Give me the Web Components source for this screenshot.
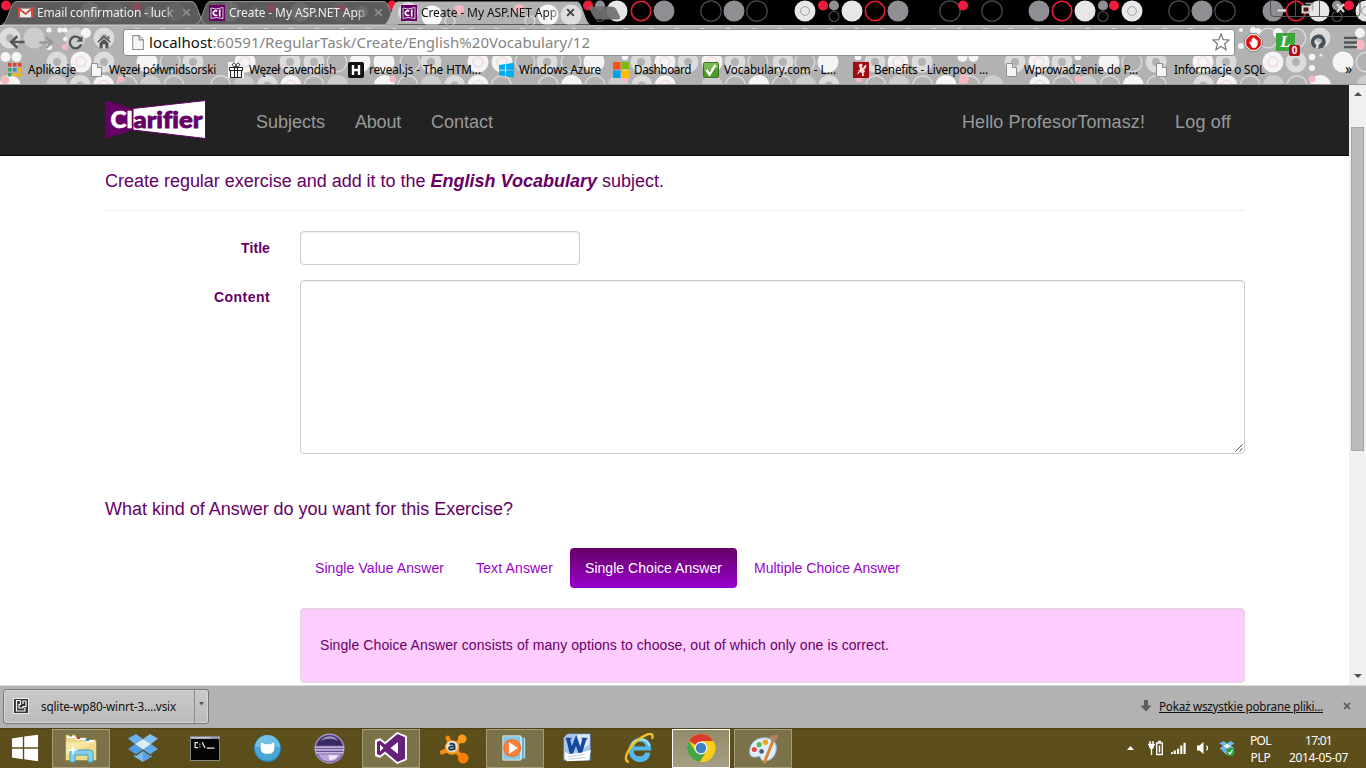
<!DOCTYPE html>
<html lang="pl">
<head>
<meta charset="utf-8">
<title>Create - My ASP.NET Application</title>
<style>
html,body{margin:0;padding:0;width:1366px;height:768px;overflow:hidden;background:#fff}
</style>
</head>
<body>
<desktop-screen></desktop-screen>
<script>
const define = (name, html, init) => customElements.define(name, class extends HTMLElement {
  connectedCallback() {
    if (this.shadowRoot) return;
    this.attachShadow({mode: 'open'}).innerHTML = typeof html === 'function' ? html(this) : html;
    if (init) init(this);
  }
});

/* Text whose letter spacing is tuned so that it takes exactly w pixels */
define('fit-text', `<style>:host{display:inline-block;white-space:pre;flex:none}span{display:inline-block}</style><span><slot></slot></span>`, el => {
  const w = +el.getAttribute('w'), s = el.shadowRoot.querySelector('span');
  s.style.letterSpacing = '0px';
  const n = el.textContent.length, nat = s.getBoundingClientRect().width;
  if (nat) s.style.letterSpacing = ((w - nat) / n) + 'px';
  el.style.width = w + 'px';
});

/* Icons */
const docIcon = '<path d="M3.5 1.5h6l4 4v9h-10z" fill="#f6f6f6" stroke="#8e8e8e"/><path d="M9.5 1.5v4h4" fill="#ddd" stroke="#8e8e8e"/>';
const siteIcon = '<rect width="16" height="16" fill="#606"/><path d="M2 3l5 1 7-1.500v11l-7-1-5 1z" fill="none" stroke="#fff" stroke-width=".8"/><path d="M8.200 6.300A2.300 2.300 0 1 0 8.200 9.800M10.700 4.500v7" fill="none" stroke="#fff" stroke-width="1.700"/>';
const icons = {
  gmail: ['0 0 16 16', '<path d="M1.500 3h13v10h-13z" fill="#f7f2f0"/><path d="M1 13V3l7 6 7-6v10" fill="none" stroke="#d94a3d" stroke-width="2.200"/><path d="M3 12l4-4M13 12L9 8" stroke="#ccc" stroke-width=".7"/>'],
  site: ['0 0 16 16', siteIcon],
  doc: ['0 0 16 16', docIcon],
  apps: ['0 0 16 16', ['#e33b2e','#e33b2e','#e33b2e','#3aa757','#2a8be0','#f5b400','#3aa757','#f5b400','#f5b400'].map((c,i)=>`<rect x="${1+(i%3)*5}" y="${1+(i/3|0)*5}" width="3.500" height="3.500" fill="${c}"/>`).join('')],
  gift: ['0 0 16 16', '<rect width="16" height="16" fill="#f4f4f4"/><path d="M1.500 5.500h13v3h-13zM2.500 8.500h11v7h-11zM6.500 5.500v10M9.500 5.500v10M8 5C5 5 3.500 3 5 1.500S8 3 8 5c0-2 1.500-5 3-3.500S11 5 8 5" fill="none" stroke="#222" stroke-width="1"/>'],
  reveal: ['0 0 16 16', '<rect width="16" height="16" rx="2" fill="#111"/><path d="M5 3v10M11 3v10M5 8h6" stroke="#fff" stroke-width="2.400"/>'],
  windows: ['0 0 16 16', '<path d="M1 3l6-.900v5.600H1zM8 2l8-1.200v6.900H8zM1 8.600h6v5.600L1 13.300zM8 8.600h8v6.900L8 14.300z" fill="#00adef"/>'],
  ms: ['0 0 16 16', '<path d="M0 0h7.500v7.500H0z" fill="#f65314"/><path d="M8.500 0H16v7.500H8.500z" fill="#7cbb00"/><path d="M0 8.500h7.500V16H0z" fill="#00a1f1"/><path d="M8.500 8.500H16V16H8.500z" fill="#fb0"/>'],
  check: ['0 0 16 16', '<rect x=".500" y=".500" width="15" height="15" rx="1.500" fill="#4f9a2c" stroke="#3a7520"/><path d="M1 1h14v5L1 9z" fill="#79b94f"/><path d="M3.500 8l3 4.500L12.500 3" fill="none" stroke="#fff" stroke-width="2.400"/>'],
  liver: ['0 0 16 16', '<rect width="16" height="16" fill="#a00d10"/><path d="M5.500 3L8 1.500l1.500 1L9 5l1 1.500L11 4l2.500-1.500-.5 3-2 2.500 1 1.500-1.500 1.500.5 3h-2l0-3-1.500-1-2 1.500-1 1.500.3-3L7 9.500 4.500 9l2.500-1.500L6.500 5z" fill="#f6dede"/>'],
  back: ['0 0 18 18', '<path d="M16.500 9H4M9.300 3.300L3.200 9l6.100 5.700" fill="none" stroke="#555" stroke-width="2.600"/>'],
  fwd: ['0 0 18 18', '<path d="M1.500 9H14M8.700 3.300L14.800 9l-6.100 5.700" fill="none" stroke="#999" stroke-width="2.600"/>'],
  reload: ['0 0 18 18', '<path d="M14.300 5.500A6.200 6.200 0 1 0 15 11" fill="none" stroke="#555" stroke-width="2.600"/><path d="M16.500 1.500v6.700H9.800z" fill="#555"/>'],
  home: ['0 0 18 18', '<path d="M9 1.500l7.500 7-1.200 1.200L9 4 2.700 9.700 1.500 8.500zM13 2.500h2v4l-2-2zM4 10l5-4.500 5 4.500v6h-3.500v-4.500h-3V16H4z" fill="#555"/>'],
  star: ['0 0 18 18', '<path d="M9 1l2.200 5.600 6 .4-4.600 3.800 1.500 5.900L9 13.400l-5.100 3.300 1.500-5.900L.8 7l6-.4z" fill="#fff" stroke="#777" stroke-width="1.200"/>'],
  abp: ['0 0 20 20', '<path d="M6.300.8h7.400l5.500 5.500v7.400l-5.500 5.500H6.300L.8 13.700V6.300z" fill="#fff" stroke="#777"/><path d="M6.900 2.300h6.200l4.600 4.600v6.200l-4.600 4.600H6.900l-4.600-4.600V6.900z" fill="#d8140f"/><path d="M5.500 9.500l1-.7L8 10.500V6h1.200V4.700h1.300V5.500h1.300V6.500H13v1h1.300v4.500l-1.800 3.500H8.500z" fill="#fff"/>'],
  ext: ['0 0 18 18', '<path d="M6.500 14.500A6.300 6.300 0 1 1 14.500 12.500" fill="none" stroke="#48505a" stroke-width="4"/><path d="M9 17l1-5 3-3 3 6z" fill="#48505a"/>'],
  menu: ['0 0 14 14', '<path d="M0 2h14M0 7h14M0 12h14" stroke="#555" stroke-width="2.600"/>'],
  close: ['0 0 8 8', '<path d="M1 1l6 6M7 1L1 7" stroke="currentColor" stroke-width="1.700"/>'],
  vsix: ['0 0 16 16', '<rect width="16" height="16" fill="#eee"/><rect x="1" y="1" width="14" height="14" fill="#333"/><path d="M7.500 2.500h-4v10.500h8.500v-3.500M7.500 2.500v4h-1.500v3.500h4V8.500h3V3h-3v3" fill="none" stroke="#fff" stroke-width="1.200"/>'],
  down: ['0 0 12 12', '<path d="M4 0h4v5.500h3.500L6 11.500.5 5.500H4z" fill="#5c5c5c"/>'],
  start: ['0 0 28 28', '<path d="M1 4.500l10.800-1.700v10.500H1zM13.200 2.600L27 .8v12.500H13.200zM1 14.700h10.800v10.500L1 23.500zM13.200 14.700H27v12.500l-13.800-1.900z" fill="#fff"/>'],
  explorer: ['0 0 32 30', '<path d="M1 5V2h9l2 3h9l2 2h8v20H1z" fill="#efd98b" stroke="#cfae56" stroke-width=".800"/><path d="M2 4h8M11 6h9M21 8h8" stroke="#fff" stroke-width="2"/><path d="M4 2.500h3" stroke="#25a244" stroke-width="2"/><path d="M12 5h3" stroke="#d33" stroke-width="2"/><path d="M21 7h3" stroke="#38c" stroke-width="2"/><path d="M1 9h30v18H1z" fill="#f8e7a3"/><path d="M1 22L31 9v18H1z" fill="#f0d98a"/><path d="M5 29V20q0-3 3-3h17q3 0 3 3v9h-5v-7H10v7z" fill="#86cfe9" stroke="#3f9fc6"/><path d="M8 10l1 6 5 1-5 1-1 5-1-5-5-1 5-1z" fill="#fff"/>'],
  dropbox: ['0 0 32 28', '<path d="M9 0l7 5-8 5-7-5.500z" fill="#69b4f0"/><path d="M23 0l-7 5 8 5 7-5.500z" fill="#7dc1f5"/><path d="M8 10l8 5.500-7 5L1 15z" fill="#4d9fe4"/><path d="M24 10l-8 5.500 7 5 8-5.500z" fill="#5cabee"/><path d="M16 5l8 5-8 5.500L8 10z" fill="#d9edfb"/><path d="M7 21l2 1 7-5v11l-9-5.500z" fill="#78b9ee"/><path d="M25 21l-2 1-7-5v11l9-5.500z" fill="#5a9fe0"/>'],
  dropok: ['0 0 32 30', '<path d="M9 0l7 5-8 5-7-5.500zM23 0l-7 5 8 5 7-5.500zM8 10l8 5.500-7 5L1 15zM24 10l-8 5.500 7 5 8-5.500zM7 21l9-4 9 4-9 7z" fill="#6cb8f2"/><path d="M16 5l8 5-8 5.500L8 10z" fill="#e6f3fc"/><circle cx="23" cy="22" r="8" fill="#27a33b"/><path d="M19 22l3 4 5-8" fill="none" stroke="#fff" stroke-width="2.500"/>'],
  cmd: ['0 0 32 26', '<rect x=".500" y=".500" width="31" height="25" fill="#050505" stroke="#888"/><path d="M1 1h30v2H1z" fill="#bcc4d0"/><path d="M23 2h7" stroke="#345" stroke-dasharray="1.500 1"/><path d="M8.500 7H5.500v5h3M10.500 8v1M10.500 11v1M13 6.500l3 6M18 12.500h8" fill="none" stroke="#eee" stroke-width="1.300"/>'],
  github: ['0 0 30 30', '<circle cx="15" cy="15" r="14" fill="#2889bd"/><circle cx="15" cy="14.500" r="13" fill="#4aa6d4"/><path d="M2 14a13 13 0 0 1 26 0q-13-6-26 0z" fill="#72bfe4"/><path d="M8.500 8.500l3.500 2h6l3.500-2 .8 4.500-.800 4.500Q20 20.500 15 20.500t-6.500-3L7.700 13z" fill="#fff"/>'],
  eclipse: ['0 0 32 32', '<circle cx="16" cy="16" r="15.500" fill="#a99bc9"/><circle cx="16" cy="16" r="14.300" fill="#6a4f9b"/><path d="M2.500 13a14 14 0 0 1 27 0z" fill="#3a2a63"/><path d="M7 8a11 11 0 0 1 18 0q-9-4-18 0z" fill="#9b90b8"/><path d="M1.500 14.500h29M1 17.500h30M2 20.500h28" stroke="#e2d9f1" stroke-width="1.300"/><path d="M4 22h24q-4 7.500-12 7.500T4 22z" fill="#b9a5da"/><path d="M15 23h10q-3 5-9 5z" fill="#f0eaf8"/>'],
  vs: ['0 0 32 32', '<path d="M22 0l10 4v24l-10 4-12-10-5 4-5-2V8l5-2 5 4z" fill="#fff"/><path d="M22.500 2l7.500 3.200v21.600L22.500 30 10 19.500 5 23.500 2 22V10l3-1.500 5 4zM23 10l-7.500 6 7.500 6zM5 12.500v7L8.500 16z" fill="#68217a" fill-rule="evenodd"/>'],
  avast: ['0 0 32 32', '<path d="M15 15L25 6M15 15L26 26M14 16L4 20M14 14L10 5" stroke="#f58a12" stroke-width="4.500" stroke-linecap="round"/><circle cx="25" cy="6" r="4.500" fill="#ff9a1c"/><circle cx="26" cy="26" r="5.500" fill="#f77f00"/><circle cx="14.500" cy="15" r="7.500" fill="#ff9d1a"/><circle cx="14.500" cy="14" r="6" fill="#dfe3e6"/><path d="M12 11.500q5-1.500 5 2v4M17 14h-3q-3 .5-2.500 2.300t5.500 0" fill="none" stroke="#273b49" stroke-width="2"/>'],
  wmp: ['0 0 30 30', '<path d="M20 3l6 1v22l-6 2z" fill="#58a9cf"/><path d="M22 3v24M25 4v22" stroke="#d4edf6" stroke-width="1"/><path d="M2 2h19v26H2z" fill="#8cc5dc" stroke="#d2ebf4"/><circle cx="12" cy="15" r="9.500" fill="#f06a1d"/><circle cx="12" cy="15" r="8.500" fill="#f5813a"/><path d="M8.500 8.500l9.500 6.500-9.500 6.500z" fill="#fff"/>'],
  word: ['0 0 32 32', '<path d="M6 1h24v28H2V5z" fill="#f4f8fd" stroke="#5c86c6"/><path d="M6 1.500h23.500v18Q12 25 2.500 20V5z" fill="#a9c5eb"/><path d="M16 1.500h13.500v10L20 19z" fill="#dce8f8"/><path d="M6.500 6l3.500 15L15 8l4.500 13L24 6" fill="none" stroke="#14489c" stroke-width="4"/><path d="M4 6h6M21 6h6" stroke="#14489c" stroke-width="2"/><path d="M3 23l17-2 11-3-3 11-23 1z" fill="#fff"/><path d="M6 25.500l18-3M7 28l18-2" stroke="#b6c6dc"/>'],
  ie: ['0 0 32 32', '<path d="M27 20h-5q-2 4-6 4-6 0-6-6h18c1-8-4-13-11-13S5 11 5 18s5 12 12 12q8 0 10-8z" fill="#53b9ec"/><path d="M10.500 14q1-5 6-5t6 5z" fill="#5e5423"/><path d="M7 14q3-7.500 10-7.500 7 0 9.500 7" fill="none" stroke="#a9e4fb" stroke-width="1.800"/><path d="M5 30C-3 28 6 13 16 6S31-1 29 6" fill="none" stroke="#f4c120" stroke-width="2.400"/>'],
  chrome: ['0 0 30 30', '<circle cx="15" cy="15" r="14" fill="#f8cd1b"/><path d="M15 15L2.900 8A14 14 0 0 1 27.200 8.200L15 8.500z" fill="#dc3a2c"/><path d="M9.500 18.500L2.900 8A14 14 0 0 0 14 29l6.500-10z" fill="#46a647"/><path d="M15 8h12.500A14 14 0 0 1 14 29l7-12z" fill="#f8cd1b"/><circle cx="15" cy="15" r="6.500" fill="#f5f5f5"/><circle cx="15" cy="15" r="5.200" fill="#3e80c6"/>'],
  paint: ['0 0 32 32', '<path d="M2 16C4 6 15 3 23 6c8 3 8 14 2 20-5 4-11 4-12 0-1-3-3-1-6-1-5 0-6-4-5-9z" fill="#dceffa" stroke="#8db9d4"/><circle cx="6.500" cy="17" r="2.600" fill="#e5493c"/><circle cx="11.500" cy="12" r="2.600" fill="#53b84b"/><circle cx="18" cy="9.500" r="2.800" fill="#f3a51c"/><circle cx="14" cy="19" r="2.400" fill="#557"/><path d="M17 30l8-20" stroke="#e2832c" stroke-width="3" stroke-linecap="round"/><path d="M24 9l-2-7 3 1 6-2q0 6-5 9z" fill="#b98157"/>'],
  plug: ['0 0 16 16', '<path d="M2 1v3M5 1v3M0 4.500h7" fill="none" stroke="#fff" stroke-width="1.400"/><path d="M1 5h5v2L4.500 9h-2L1 7z" fill="#fff"/><path d="M3.500 8v7" stroke="#fff" stroke-width="1.400"/><path d="M8.700 3h5.600v11.500H8.700z" fill="#5d4f1c" stroke="#fff" stroke-width="1.300"/><path d="M10 1.500h3" stroke="#fff" stroke-width="1.500"/><path d="M10.800 5.500h1.400v7h-1.400z" fill="#fff"/>'],
  signal: ['0 0 16 14', '<path d="M1 14v-2M4 14v-4M7.500 14V8M11 14V4M14.500 14V1" stroke="#fff" stroke-width="2.300"/>'],
  vol: ['0 0 14 14', '<path d="M0 4.500h2.500L6.500 1v12l-4-3.500H0z" fill="#fff"/><path d="M9.500 4.500q2 2.500 0 5" fill="none" stroke="#fff" stroke-width="1.200"/>'],
};
define('ui-icon', el => {
  const [vb, body] = icons[el.getAttribute('name')];
  const w = el.getAttribute('w') || 16, h = el.getAttribute('h') || w;
  return `<style>:host{display:block;flex:none;width:${w}px;height:${h}px}svg{display:block}</style><svg width="${w}" height="${h}" viewBox="${vb}" preserveAspectRatio="none">${body}</svg>`;
});

/* Dotted browser theme painted behind the window frame */
define('theme-pattern', () => {
  const c = (x, y, r, fill, stroke = 'none', w = 0, o = 1) => `<circle cx="${x}" cy="${y}" r="${r}" fill="${fill}" stroke="${stroke}" stroke-width="${w}" opacity="${o}"/>`;
  let top = '';
  const kinds = {
    R: x => c(x, 11, 9.700, 'none', '#e91b3a', 1.600),
    G: x => c(x, 11, 10.500, '#8f8e92'),
    W: x => c(x, 11, 10.500, '#e6e7e7'),
    D: x => c(x, 11, 10.200, 'none', '#4b4b4d', 1.200),
    O: x => c(x, 11, 10.500, '#e6e7e7') + c(x, 11, 4.400, 'none', '#a0a0a2', 1),
    r: x => c(x, 5.500, 5, '#ed1c3c'),
    g: x => c(x, 5.500, 5, '#8f8e92') + c(x, 16.500, 5, 'none', '#4b4b4d', 1.200),
  };
  const seq = 'r6 r392 r588 g600 W617 R641 G664 D711 G734 D757 O805 r823 g834 W852 R875 G898 D950 r963 D992 G1039 R1062 W1085 g1103 r1114 O1132 D1179 G1202 D1225 G1273 R1296 W1319 g1337 r1349 O1366';
  seq.split(' ').forEach(s => top += kinds[s[0]](+s.slice(1)));

  let bar = '';
  const b = {
    W: (x, y) => c(x, y, 10.500, '#f5f5f5'),
    P: (x, y) => c(x, y, 10.500, '#f4f4f4') + c(x, y, 5, 'none', '#f3dadd', 1.500),
    T: (x, y) => c(x, y, 7.200, 'none', '#dcdcdc', 6.500),
    O: (x, y) => c(x, y, 9.800, 'none', '#d8d8d8', 1.400),
    L: (x, y) => c(x, y, 10.500, '#cdcdcd'),
    S: (x, y) => c(x - 5, y - 5, 3.300, '#f5f5f5') + c(x - 5, y + 6, 3, '#f5f5f5') + c(x + 4, y - 7, 1.500, '#eee'),
    s: (x, y) => c(x - 5.500, y - 5, 5, '#f5f5f5') + c(x + 5.500, y - 5, 5, '#f5f5f5'),
  };
  const row = (y, t) => t.split(' ').forEach(s => bar += b[s[0]](+s.slice(1), y));
  row(38, 'T10 L34 L75 T104 O1268 O1296 T1320');
  row(62, 's11 T57 P81 T104 W147 O170 T193 P245 T290 T314 O337 W360 W384 O410 T431 P478 P502 O525 T547 O571 W594 S630 T641 P665 T688 P712 T735 O758 T783 O805 W828 S863 T875 P898 T922 s968 T1015 P1039 T1062 S1083 W1109 O1132 T1156 P1203 T1226 P1273 T1296 S1317 W1343 O1366');
  const cyc = 'WOLTPOLO';
  for (let i = 0; i < 59; i++) if (i % 7 !== 1) bar += b[cyc[i % 8]](10 + i * 23.400, 85.5);
  for (let i = 0; i < 43; i++) bar += c(137 + i * 25.700, i % 3 ? 33 : 37, i % 3 ? 5 : 9, '#dedede');
  [[49,30,2.600],[60,30,2.600],[65,30,2.600],[86,33,5],[49,47,3],[65,39,2],[1241,30,2],[1253,30,3],[1258,31,3],[1278,33,5],[1241,46,3],[1360,33,5]].forEach(p => bar += c(...p, '#f5f5f5'));
  [[65,47,3],[5,80,4.500],[121,79,3.500],[393,79,3.500],[625,79,3.500],[859,79,3.500],[964,79,5],[1078,79,3.500],[1312,79,3.500],[1360,45,5]].forEach(p => bar += c(...p, '#f6b9c1'));

  const dim = [32, 90, 115, 150, 175, 230, 255, 300, 340, 362].map((x, i) => c(x, 12, i % 3 ? 10 : 6, i % 2 ? '#7b7b7b' : '#6b6b6b', 'none', 0, .5)).join('')
    + c(137, 7, 4, '#8c4a54') + c(271, 8, 3.500, '#8c4a54') + c(342, 8, 3.500, '#8c4a54');
  const tab = (x0, x1) => `M${x0} 24.500C${x0 + 6} 24 ${x0 + 8} 1.500 ${x0 + 14} 1.500H${x1 - 14}C${x1 - 8} 1.500 ${x1 - 6} 24 ${x1} 24.500z`;
  const active = c(432, 16, 10.500, '#fafafa') + c(408, 12, 10, '#dedede') + c(450, 21, 5, 'none', '#ddd', 1.200) + c(459, 10, 5, '#f6b9c1') + c(519, 9, 5, '#f6b9c1') + c(530, 21, 5, 'none', '#ddd', 1.200) + c(548, 15, 10.500, '#f8f8f8') + c(571, 15, 10.500, '#dedede');
  return `<style>:host{display:block;position:absolute;inset:0;overflow:hidden}svg{display:block}</style>
  <svg width="1366" height="85" viewBox="0 0 1366 85">
    <defs><clipPath id="in"><path d="${tab(2, 206)}${tab(196, 398)}"/></clipPath><clipPath id="ac"><path d="${tab(384, 591)}"/></clipPath></defs>
    <rect width="1366" height="26" fill="#000"/>${top}
    <g clip-path="url(#in)"><rect width="410" height="26" fill="#5b5b5b"/>${dim}</g>
    <path d="${tab(2, 206)}" fill="none" stroke="#929292" stroke-width="1"/><path d="${tab(196, 398)}" fill="none" stroke="#929292" stroke-width="1"/>
    <path d="M589 6.500h22q4 0 6 4l3 6q1 3-3 3h-18q-4 0-6-4l-4-7q-1-2 0-2z" fill="#707070" fill-opacity=".92"/>
    <rect y="25" width="1366" height="60" fill="#b2b2b2"/>
    <svg y="25" width="1366" height="59" viewBox="0 25 1366 59">${bar}</svg>
    <g clip-path="url(#ac)"><rect x="384" width="212" height="27" fill="#b2b2b2"/>${active}</g>
    <path d="M0 25.500H388M589 25.500H1366" stroke="#c4c4c4"/>
    <path d="M0 84.500H1366" stroke="#999"/>
    <path d="M1270.500 0v13q0 3.500 3.500 3.500h82q4 0 4-3.500V0M1295.500 0v16M1319.500 0v16" fill="none" stroke="#555" />
    <path d="M1277 9h9v3h-9z" fill="#ddd" stroke="#777" stroke-width=".600"/>
    <path d="M1305.500 3.500h7v7" fill="none" stroke="#aaa" stroke-width="1.600"/>
    <path d="M1302.500 6.500h7v6h-7z" fill="#511" stroke="#d5d5d5" stroke-width="2"/>
    <path d="M1337 4l7 8M1344 4l-7 8" stroke="#ddd" stroke-width="2.200"/>
  </svg>`;
});

define('browser-tab', el => {
  const mail = el.getAttribute('icon') === 'gmail', active = el.hasAttribute('active');
  return `<style>
 :host{display:flex;align-items:center;height:25px;color:${active ? '#111' : '#eee'};font:12px "Noto Sans","Open Sans",sans-serif;flex:none}
 .t{margin-left:4px;width:137px;overflow:hidden;height:20px;line-height:20px;-webkit-mask-image:linear-gradient(90deg,#000 92%,rgba(0,0,0,.3))}
 .x{margin-left:8px;color:${active ? '#444' : '#8b8b8b'}}
 </style><ui-icon name="${el.getAttribute('icon')}" w="${mail ? 15 : 16}" h="${mail ? 14 : 16}"></ui-icon><div class="t"><slot></slot></div><ui-icon class="x" name="close" w="9"></ui-icon>`;
});

define('book-mark', el => `<style>
 :host{display:flex;align-items:center;gap:5px;height:26px;width:${+el.getAttribute('w') + 33}px;flex:none;color:#000;font:11.700px "Noto Sans","Open Sans",sans-serif}
 fit-text{margin-bottom:2px}
 </style><ui-icon name="${el.getAttribute('icon')}"></ui-icon><fit-text w="${el.getAttribute('t') || el.getAttribute('w')}">${el.textContent}</fit-text>`);

define('browser-chrome', `<style>
 :host{display:block;position:relative;height:85px}
 .in{position:relative;display:flex;flex-direction:column;height:85px}
 .tabs{display:flex;height:25px;padding-left:18px;gap:18px}
 .bar{display:flex;align-items:center;height:34px;padding-left:8px}
 .omni{display:flex;align-items:center;box-sizing:border-box;width:1112px;height:27px;margin-left:11px;background:#fff;border:1px solid #8d8d8d;border-radius:3px;padding:0 4px 0 5px;font:15px "Noto Sans","Open Sans",sans-serif;color:#858585}
 .omni b{font-weight:400;color:#111}
 .url{margin-left:3px;flex:1}
 .marks{display:flex;align-items:center;height:22px;padding-left:7px}
 .badge{position:absolute;left:13px;top:12px;width:11px;height:11px;background:#b40e1d;border-radius:2px;color:#fff;font:bold 10px/11px "Liberation Sans",sans-serif;text-align:center}
 .l{position:relative;width:19px;height:18px;background:#3ea53a;color:#fff;font:italic bold 17px/18px "Liberation Serif",serif;text-align:center}
 .r{display:flex;align-items:center}
 .more{font:14px/18px "Noto Sans",sans-serif;margin:-3px 0 0 46px}
</style><theme-pattern></theme-pattern>
<div class="in">
 <div class="tabs">
  <browser-tab icon="gmail"><fit-text w="142">Email confirmation - lucky</fit-text></browser-tab>
  <browser-tab icon="site"><fit-text w="136">Create - My ASP.NET App</fit-text></browser-tab>
  <browser-tab icon="site" active><fit-text w="136">Create - My ASP.NET App</fit-text></browser-tab>
 </div>
 <div class="bar">
  <ui-icon name="back" w="18"></ui-icon>
  <ui-icon name="fwd" w="17" style="margin-left:12px"></ui-icon>
  <ui-icon name="reload" w="17" style="margin-left:12px"></ui-icon>
  <ui-icon name="home" w="16" style="margin-left:12px"></ui-icon>
  <div class="omni"><ui-icon name="doc" w="17"></ui-icon><div class="url"><fit-text w="441"><b>localhost</b>:60591/RegularTask/Create/English%20Vocabulary/12</fit-text></div><ui-icon name="star" w="18"></ui-icon></div>
  <div class="r"><ui-icon name="abp" w="19" style="margin-left:9px"></ui-icon>
  <div class="l" style="margin-left:13px">L<div class="badge">0</div></div>
  <ui-icon name="ext" w="16" style="margin-left:15px"></ui-icon>
  <ui-icon name="menu" w="13" style="margin-left:18px"></ui-icon></div>
 </div>
 <div class="marks">
  <book-mark icon="apps" w="48">Aplikacje</book-mark>
  <book-mark icon="doc" w="107">Węzeł półwnidsorski</book-mark>
  <book-mark icon="gift" w="87">Węzeł cavendish</book-mark>
  <book-mark icon="reveal" w="117" t="112">reveal.js - The HTM...</book-mark>
  <book-mark icon="windows" w="82">Windows Azure</book-mark>
  <book-mark icon="ms" w="57">Dashboard</book-mark>
  <book-mark icon="check" w="117" t="112">Vocabulary.com - L...</book-mark>
  <book-mark icon="liver" w="117" t="114">Benefits - Liverpool ...</book-mark>
  <book-mark icon="doc" w="117" t="114">Wprowadzenie do P...</book-mark>
  <book-mark icon="doc" w="117" t="91" style="width:146px">Informacje o SQL</book-mark>
  <span class="more">»</span>
 </div>
</div>`);

define('site-logo', `<style>:host{display:block;width:101px;height:40px}svg{display:block}text{font-variant-ligatures:none;font-feature-settings:"liga" 0}</style>
<svg width="101" height="40" viewBox="0 0 101 40"><path d="M0 0l28 9v21L0 39z" fill="#606"/><path d="M28 8.500L100.500.500v38L28 30z" fill="#fff" stroke="#606"/>
<g font-family="Lato,sans-serif" font-weight="900" font-size="23"><text x="5.500" y="28" fill="#fff" stroke="#fff" stroke-width=".600" textLength="22" lengthAdjust="spacingAndGlyphs">Cl</text><text x="28.500" y="28" fill="#606" stroke="#606" stroke-width=".800" textLength="69" lengthAdjust="spacingAndGlyphs">arifier</text></g></svg>`);

define('site-navbar', `<style>
 :host{display:flex;align-items:center;box-sizing:border-box;height:71px;background:#222;border-bottom:1px solid #080808;padding:0 118px 0 105px;font:18px "Liberation Sans",Arial,sans-serif;color:#999}
 nav{display:flex;gap:30px;margin-top:4px}.l{margin-left:50px;flex:1}
</style><site-logo></site-logo><nav class="l"><fit-text w="69">Subjects</fit-text><fit-text w="46">About</fit-text><fit-text w="62">Contact</fit-text></nav>
<nav><fit-text w="183">Hello ProfesorTomasz!</fit-text><fit-text w="56">Log off</fit-text></nav>`);

define('form-row', el => `<style>
 :host{display:flex;color:#606;font:bold 14px/20px "Liberation Sans",Arial,sans-serif}
 label{width:165px;padding-top:7px;text-align:right;margin-right:30px;flex:none}
</style><label><fit-text w="${el.getAttribute('lw')}">${el.getAttribute('label')}</fit-text></label><slot></slot>`);

define('form-box', el => `<style>
 :host{display:flex;align-items:flex-end;justify-content:flex-end;box-sizing:border-box;border:1px solid #ccc;border-radius:4px;background:#fff;box-shadow:inset 0 1px 1px rgba(0,0,0,.075)}
 svg{display:block;margin:0 1px 1px 0}
</style>${el.hasAttribute('grip') ? '<svg width="8" height="8"><path d="M.5 7.500l7-7M4.500 7.500l3-3" stroke="#555" stroke-width="1"/></svg>' : ''}`);

define('answer-tab', `<style>
 :host{display:block;box-sizing:border-box;height:40px;padding:10px 15px;border-radius:4px;font:14px/20px "Liberation Sans",Arial,sans-serif;color:#90c}
 :host([active]){color:#fff;background:linear-gradient(#606,#90c)}
</style><slot></slot>`);

define('scroll-bar', `<style>
 :host{display:flex;flex-direction:column;align-items:center;width:17px;height:600px;background:#f0f0f0;flex:none}
 svg{display:block}.t{box-sizing:border-box;width:13px;height:324px;background:#bbb;border:1px solid #a6a6a6;margin-top:29px}
 .d{margin-top:auto;margin-bottom:7px}.u{margin-top:7px}
</style><svg class="u" width="8" height="4" style="margin-bottom:2px"><path d="M4 0l4 4H0z" fill="#505050"/></svg><div class="t"></div><svg class="d" width="8" height="4"><path d="M4 4l4-4H0z" fill="#505050"/></svg>`);

define('web-page', `<style>
 :host{display:flex;height:600px;background:#fff;overflow:hidden}
 .doc{width:1349px;height:600px;overflow:hidden;font:14px/20px "Liberation Sans",Arial,sans-serif;color:#606}
 main{padding:0 104px 0 105px}
 h4{margin:0;font:18px/20px "Liberation Sans",Arial,sans-serif;height:20px;display:flex}
 hr{border:0;border-top:1px solid #eee;margin:19px 0 20px}
 .tabs{display:flex;gap:2px;margin:29px 0 20px 195px}
 .well{box-sizing:border-box;height:75px;margin-left:195px;background:#fcf;border:1px solid #e3d6e3;border-radius:4px;padding:26px 19px;box-shadow:inset 0 1px 1px rgba(0,0,0,.05)}
</style><div class="doc"><site-navbar></site-navbar>
<main><h4 style="padding-top:15px"><fit-text w="325.500">Create regular exercise and add it to the </fit-text><fit-text w="166.500"><b><i>English Vocabulary</i></b></fit-text><fit-text w="67"> subject.</fit-text></h4>
<hr>
<form-row label="Title" lw="29"><form-box style="width:280px;height:34px"></form-box></form-row>
<form-row label="Content" lw="56" style="margin-top:15px"><form-box grip style="width:945px;height:174px"></form-box></form-row>
<h4 style="margin-top:45px"><fit-text w="408">What kind of Answer do you want for this Exercise?</fit-text></h4>
<div class="tabs"><answer-tab><fit-text w="129">Single Value Answer</fit-text></answer-tab><answer-tab><fit-text w="77">Text Answer</fit-text></answer-tab><answer-tab active><fit-text w="137">Single Choice Answer</fit-text></answer-tab><answer-tab><fit-text w="146">Multiple Choice Answer</fit-text></answer-tab></div>
<div class="well"><fit-text w="569">Single Choice Answer consists of many options to choose, out of which only one is correct.</fit-text></div>
</main></div><scroll-bar></scroll-bar>`);

define('download-bar', `<style>
 :host{display:flex;box-sizing:border-box;height:43px;background:#b2b2b2;border-top:1px solid #d8d8d8;padding:2px 15px 4px 3px;align-items:center;font:11.700px "Noto Sans","Open Sans",sans-serif;color:#111}
 .b{display:flex;align-items:center;box-sizing:border-box;width:206px;height:35px;border:1px solid #777;border-radius:3px;background:linear-gradient(#c9c9c9,#bcbcbc);box-shadow:inset 0 0 0 1px #d5d5d5;padding-left:9px}
 .b fit-text{margin-left:12px;margin-bottom:1px}
 .d{box-sizing:border-box;width:14px;height:33px;margin-left:18px;border-left:1px solid #8d8d8d;padding:12px 0 0 4px}
 .sp{flex:1}.a{margin:0 20px 0 7px}
 svg{display:block}
</style><div class="b"><ui-icon name="vsix"></ui-icon><fit-text w="135">sqlite-wp80-winrt-3....vsix</fit-text><div class="d"><svg width="5" height="4"><path d="M0 0h5L2.500 3.500z" fill="#555"/></svg></div></div>
<div class="sp"></div><ui-icon name="down" w="12"></ui-icon><fit-text class="a" w="164"><u>Pokaż wszystkie pobrane pliki...</u></fit-text><ui-icon name="close" w="8" style="color:#555"></ui-icon>`);

define('task-button', el => `<style>
 :host{display:flex;align-items:center;justify-content:center;box-sizing:border-box;width:58px;height:39px;flex:none}
 :host([open]){background:#7c7249;border:1px solid #a59c7a}
 :host([focused]){background:linear-gradient(#938b68,#a69e84);border:1px solid #fff}
</style><ui-icon name="${el.getAttribute('icon')}" w="${el.getAttribute('w')}" h="${el.getAttribute('h') || el.getAttribute('w')}"></ui-icon>`);

define('task-bar', `<style>
 :host{display:flex;align-items:center;box-sizing:border-box;height:40px;padding-left:1px;background:linear-gradient(#493d12 0,#5e501d 2px,#5b4d1a);font:12px "Noto Sans","Open Sans",sans-serif;color:#fff}
 .apps{display:flex;gap:4px;flex:1}
 .tray{display:flex;align-items:center;padding-right:18px}
 .two{display:flex;flex-direction:column;align-items:center;line-height:17px;padding-top:1px}
 svg{display:block}
</style><div class="apps">
 <task-button icon="start" w="28" style="width:47px"></task-button>
 <task-button icon="explorer" w="32" h="30" open></task-button>
 <task-button icon="dropbox" w="32" h="28"></task-button>
 <task-button icon="cmd" w="30" h="25"></task-button>
 <task-button icon="github" w="29"></task-button>
 <task-button icon="eclipse" w="31"></task-button>
 <task-button icon="vs" w="32" open></task-button>
 <task-button icon="avast" w="31"></task-button>
 <task-button icon="wmp" w="28" open></task-button>
 <task-button icon="word" w="30"></task-button>
 <task-button icon="ie" w="31"></task-button>
 <task-button icon="chrome" w="30" focused></task-button>
 <task-button icon="paint" w="31" open></task-button>
</div><div class="tray">
 <svg width="7" height="4" style="margin-right:14px"><path d="M3.500 0L7 4H0z" fill="#fff"/></svg>
 <ui-icon name="plug" w="16"></ui-icon>
 <ui-icon name="signal" w="15" h="12" style="margin-left:7px"></ui-icon>
 <ui-icon name="vol" w="14" style="margin-left:11px"></ui-icon>
 <ui-icon name="dropok" w="16" h="15" style="margin-left:8px"></ui-icon>
 <div class="two" style="margin-left:15px"><fit-text w="21">POL</fit-text><fit-text w="20">PLP</fit-text></div>
 <div class="two" style="margin-left:18px"><fit-text w="27">17:01</fit-text><fit-text w="59">2014-05-07</fit-text></div>
</div>`);

define('desktop-screen', `<style>:host{display:flex;flex-direction:column;width:1366px;height:768px;overflow:hidden}</style>
<browser-chrome></browser-chrome><web-page></web-page><download-bar></download-bar><task-bar></task-bar>`);
</script>
</body>
</html>
